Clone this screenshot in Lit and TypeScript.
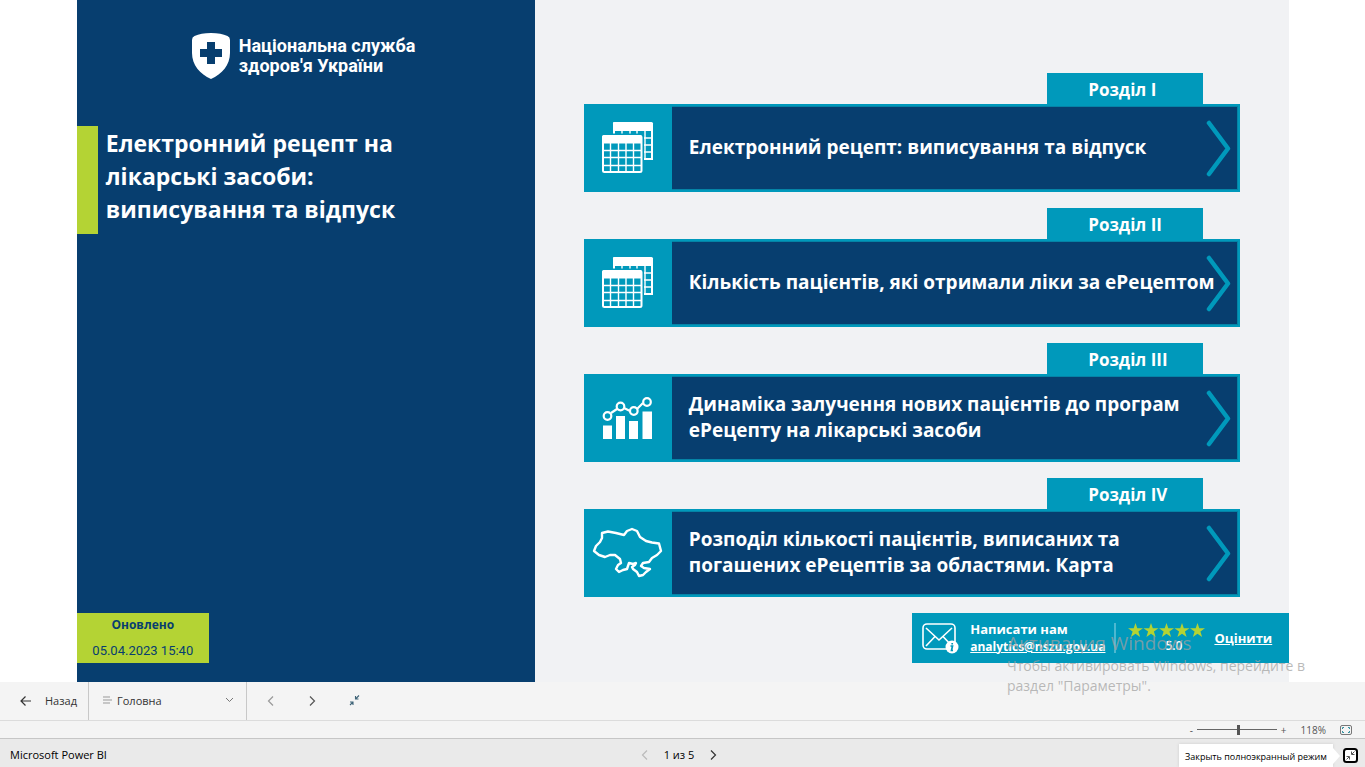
import { LitElement, html, css, svg } from "lit";
import { customElement, property, state } from "lit/decorators.js";

type IconName = "tables" | "chart" | "map";

interface Section {
  tab: string;
  title: string;
  icon: IconName;
}

const SECTIONS: Section[] = [
  { tab: "Розділ I", title: "Електронний рецепт: виписування та відпуск", icon: "tables" },
  { tab: "Розділ II", title: "Кількість пацієнтів, які отримали ліки за еРецептом", icon: "tables" },
  { tab: "Розділ III", title: "Динаміка залучення нових пацієнтів до програм еРецепту на лікарські засоби", icon: "chart" },
  { tab: "Розділ IV", title: "Розподіл кількості пацієнтів, виписаних та погашених еРецептів за областями. Карта", icon: "map" },
];

const ICONS = {
  tables: svg`
    <g fill="none" stroke="#fff" stroke-width="1.4">
      <path d="M30 18V24M38 18V24M46 18V24M53 18V24M61 18V55M38 27V31M46 27V31M53 27V31M60 34H68M60 41H68M60 48H68"/>
      <path stroke-width="2" d="M30 30V20H68V55H60"/>
    </g>
    <path fill="#fff" d="M29 27V19.500q0-1.500 1.500-1.500H67.500q1.500 0 1.500 1.500V27Z"/>
    <path fill="#0099bb" d="M17 31q0-1.500 2-1.500H58q2 0 2 2V70H17Z"/>
    <path fill="#fff" d="M18 39.500V33q0-2 2-2H56q2 0 2 2V39.500Z"/>
    <rect x="19" y="32" width="38.500" height="36" rx="1.500" fill="none" stroke="#fff" stroke-width="2"/>
    <path fill="none" stroke="#fff" stroke-width="1.400" d="M26.500 38V68M34.500 38V68M42 38V68M49.500 38V68M19 46.500H57M19 53.500H57M19 61.500H57"/>`,
  chart: svg`
    <path fill="#fff" d="M19 51.500h9V65h-9ZM32 42h9v23h-9ZM45 47h9v18h-9ZM58.500 37.500h9.500V65h-9.500Z"/>
    <g fill="none" stroke="#fff" stroke-width="2.200">
      <path d="M27 39 33 35M40 34l6 3M53 35l6-6"/>
      <circle cx="23.500" cy="42" r="3.800"/>
      <circle cx="36.500" cy="32.500" r="3.800"/>
      <circle cx="49.800" cy="37" r="3.800"/>
      <circle cx="63" cy="28" r="3.800"/>
    </g>`,
  map: svg`
    <path fill="none" stroke="#fff" stroke-width="2.400" stroke-linejoin="round"
      d="M18 24 24 22.500 32 24 40 26 43 22 48 20 53 22 56 28 59 30 62 32 68 33.500 75 34.500 77 42 73 46 68 49 65 53 59 54 57 57 60 59 66 60 62 63 59 66 55 67 53 63 49 60 48 58 51 56 52 54 49 55 45 54 43 60 39 61 35 63 32 60 34 56 37 54 36 50 31 46 26 46 21 48 15 46 10 42 12 37 16 33 18 29Z"/>`,
};

@customElement("section-card")
class SectionCard extends LitElement {
  @property({ attribute: false }) section!: Section;

  static styles = css`
    :host { display: block; }
    .link {
      display: flex;
      flex-direction: column;
      color: #fff;
      text-decoration: none;
      font-weight: 700;
    }
    .tab {
      align-self: flex-end;
      width: 156px;
      height: 31px;
      margin-right: 37px;
      box-sizing: border-box;
      background: #0099bb;
      font-size: 17px;
      line-height: 34px;
      padding-left: 41px;
    }
    .card {
      display: flex;
      align-items: stretch;
      min-height: 88px;
      box-sizing: border-box;
      background: #073e6f;
      border: 2px solid #0099bb;
      border-left: 0;
      box-shadow: inset 0 0 0 1px #0583a6;
    }
    .icon {
      flex: none;
      width: 88px;
      background: #0099bb;
      margin: -2px 0;
    }
    .icon svg { display: block; width: 88px; height: 88px; }
    .title {
      flex: 1;
      align-self: center;
      padding: 0 0 3px 17px;
      font-size: 19px;
      line-height: 26px;
      min-width: 0;
    }
    .chevron { flex: none; align-self: center; width: 34px; height: 58px; margin-left: -16px; }
  `;

  render() {
    const s = this.section;
    return html`
      <a class="link" href="#">
        <span class="tab">${s.tab}</span>
        <span class="card">
          <span class="icon"><svg viewBox="0 0 88 88" aria-hidden="true">${ICONS[s.icon]}</svg></span>
          <span class="title">${s.title}</span>
          <svg class="chevron" viewBox="0 0 34 58" aria-hidden="true">
            <path d="M5 4 24 29.500 5 55" fill="none" stroke="#0099bb" stroke-width="4.500" stroke-linecap="round" stroke-linejoin="round"/>
          </svg>
        </span>
      </a>`;
  }
}

@customElement("app-root")
class AppRoot extends LitElement {
  @state() private zoom = 118;

  static styles = css`
    :host {
      display: flex;
      flex-direction: column;
      position: relative;
      height: 100vh;
      overflow: hidden;
      background: #fff;
      font-family: "Open Sans", "Noto Sans", sans-serif;
      color: #333;
    }
    button, select {
      font: inherit;
      color: inherit;
      background: none;
      border: 0;
      padding: 0;
      margin: 0;
    }
    svg { display: block; }
    .report {
      flex: 1;
      min-height: 0;
      aspect-ratio: 16 / 9;
      align-self: center;
      margin-left: 1px;
      display: grid;
      grid-template-columns: 458px 1fr;
      background: #f1f2f4;
    }
    .side {
      display: flex;
      flex-direction: column;
      background: #073e6f;
      color: #fff;
    }
    .logo {
      display: flex;
      gap: 9px;
      padding: 33px 0 0 115px;
      font: 700 18px/20px Roboto, sans-serif;
    }
    .logo span { padding-top: 3px; }
    .heading { display: flex; margin-top: 47px; }
    .heading::before { content: ""; width: 21px; background: #b4d334; }
    h1 {
      flex: 1;
      margin: 0;
      padding: 1px 80px 8px 8px;
      font-size: 23px;
      line-height: 33px;
      font-weight: 700;
    }
    .updated {
      width: 132px;
      height: 50px;
      margin: auto 0 19px;
      background: #b4d334;
      color: #073e6f;
      text-align: center;
      font-size: 12px;
    }
    .updated b { display: block; line-height: 24px; }
    .updated time { display: block; font: 13px/28px Roboto, sans-serif; }
    .main { display: flex; flex-direction: column; }
    .sections {
      display: flex;
      flex-direction: column;
      gap: 16px;
      padding: 73px 49px 0;
    }
    .contact {
      display: flex;
      align-items: center;
      height: 50px;
      width: 377px;
      box-sizing: border-box;
      margin: auto 0 19px auto;
      padding: 0 17px 0 9px;
      background: #0099bb;
      color: #fff;
      font-size: 13px;
      font-weight: 700;
      line-height: 18px;
    }
    .contact a { color: #fff; }
    .write { margin-left: 10px; flex: 1; padding-bottom: 1px; }
    .write a { display: block; font-size: 12px; }
    .rating {
      border-left: 2px solid #4db8d0;
      height: 30px;
      padding: 0 9px 0 12px;
      text-align: center;
      font-size: 12px;
      font-weight: 600;
      line-height: 16px;
    }
    .rating span { padding-left: 14px; }
    .toolbar {
      display: flex;
      height: 38px;
      background: #f4f4f4;
      border-bottom: 1px solid #dcdcdc;
      font-size: 11px;
      flex: none;
    }
    .back {
      display: flex;
      align-items: center;
      gap: 13px;
      box-sizing: border-box;
      width: 89px;
      padding: 0 0 1px 20px;
      border-right: 1px solid #c8c8c8;
    }
    .pages {
      display: flex;
      align-items: center;
      width: 158px;
      padding: 0 12px 2px 14px;
      box-sizing: border-box;
      gap: 5px;
      border-right: 1px solid #c8c8c8;
    }
    .pages select { appearance: none; flex: 1; min-width: 0; }
    .steps { display: flex; align-items: center; gap: 29px; padding-left: 18px; }
    .zoombar {
      display: flex;
      align-items: center;
      justify-content: flex-end;
      height: 17px;
      flex: none;
      background: #f4f4f4;
      border-bottom: 1px solid #c6c6c6;
      padding-right: 13px;
      font-size: 10px;
      color: #555;
    }
    .zoombar button, .zoombar output { line-height: 16px; }
    .zoombar output { margin: 0 14px 0 14px; }
    .range {
      appearance: none;
      width: 80px;
      height: 11px;
      margin: 0 4px;
      background: linear-gradient(#666, #666) center / 100% 1px no-repeat;
    }
    .range::-webkit-slider-thumb {
      appearance: none;
      width: 3px;
      height: 10px;
      background: #555;
    }
    .status {
      display: grid;
      grid-template-columns: 1fr auto 1fr;
      align-items: center;
      height: 28px;
      flex: none;
      background: #eaeaea;
      color: #000;
      font-size: 11px;
      padding: 0 7px 0 10px;
    }
    .pager { display: flex; align-items: center; gap: 13px; padding-top: 3px; margin-right: 10px; }
    .brand { padding-top: 3px; }
    .exit { display: flex; justify-content: flex-end; align-items: center; padding-top: 4px; }
    .tip {
      position: absolute;
      right: 32px;
      bottom: 0;
      width: 154px;
      height: 23px;
      background: #fff;
      box-shadow: 0 0 3px #ccc;
      font: 9px/26px "Open Sans", sans-serif;
      color: #000;
      text-align: center;
      white-space: nowrap;
    }
    .tip::after {
      content: "";
      position: absolute;
      left: 100%;
      top: 4px;
      border: 8px solid transparent;
      border-left: 7px solid #fff;
      border-right: 0;
    }
    .watermark {
      position: absolute;
      left: 1007px;
      top: 631px;
      color: #a0a0a0b8;
      font-size: 14px;
      line-height: 20px;
      pointer-events: none;
      white-space: nowrap;
    }
    .watermark p { margin: 0; }
    .watermark .lead { font-size: 19px; line-height: 25px; }
  `;

  private chevron(d: string, color: string) {
    return html`<svg width="12" height="12" viewBox="0 0 12 12" aria-hidden="true">
      <path d=${d} fill="none" stroke=${color} stroke-width="1.200"/></svg>`;
  }

  render() {
    const left = "M8 1.500 3.500 6 8 10.500";
    const right = "M4 1.500 8.500 6 4 10.500";
    return html`
      <div class="report">
        <aside class="side">
          <div class="logo">
            <svg width="38" height="46" viewBox="0 0 38 46" aria-hidden="true">
              <path fill="#fff" d="M19 0C26 0 31 1 35.500 3Q38 4 38 7V20C38 32 30 41 19 46 8 41 0 32 0 20V7Q0 4 2.500 3C7 1 12 0 19 0Z"/>
              <path fill="#073e6f" d="M15 9h8v7h7v8h-7v7h-8v-7H8v-8h7Z"/>
            </svg>
            <span>Національна служба<br />здоров'я України</span>
          </div>
          <div class="heading"><h1>Електронний рецепт на<br />лікарські засоби:<br />виписування та відпуск</h1></div>
          <div class="updated"><b>Оновлено</b><time>05.04.2023 15:40</time></div>
        </aside>
        <main class="main">
          <div class="sections">
            ${SECTIONS.map((s) => html`<section-card .section=${s}></section-card>`)}
          </div>
          <div class="contact">
            <svg width="39" height="34" viewBox="0 0 39 34" aria-hidden="true">
              <g fill="none" stroke="#fff" stroke-width="1.600">
                <rect x="2" y="3" width="32" height="25" rx="4"/>
                <path d="M5 7 18 19 31 7M5 25 14 15.500M31 25 22 15.500"/>
              </g>
              <circle cx="31" cy="26" r="6.500" fill="#fff"/>
              <path d="M29.500 25h2l-1 4.500h1.500M31.200 22v1.500" fill="none" stroke="#0099bb" stroke-width="1.700"/>
            </svg>
            <div class="write">Написати нам<a href="mailto:analytics@nszu.gov.ua">analytics@nszu.gov.ua</a></div>
            <div class="rating">
              <svg width="77" height="15" viewBox="0 0 77 15" aria-hidden="true">
                ${[0, 1, 2, 3, 4].map((i) => svg`<path transform="translate(${i * 15.5} 0)" fill="#b4d334" d="M7.500 0 9.300 5.300H15L10.400 8.600 12.100 14 7.500 10.700 2.900 14 4.600 8.600 0 5.300H5.700Z"/>`)}
              </svg>
              <span>5.0</span>
            </div>
            <a href="#">Оцінити</a>
          </div>
        </main>
      </div>

      <nav class="toolbar">
        <button class="back">
          <svg width="12" height="12" viewBox="0 0 12 12" aria-hidden="true"><path d="M11 6H1.500M5.500 1.500 1 6l4.500 4.500" fill="none" stroke="#333" stroke-width="1.200"/></svg>
          Назад
        </button>
        <div class="pages">
          <svg width="9" height="8" viewBox="0 0 9 8" aria-hidden="true"><path d="M0 1H7M0 4H9M0 7H7" stroke="#999"/></svg>
          <select aria-label="Сторінка"><option>Головна</option></select>
          <svg width="9" height="6" viewBox="0 0 9 6" aria-hidden="true"><path d="M1 1 4.500 4.500 8 1" fill="none" stroke="#777"/></svg>
        </div>
        <div class="steps">
          <button aria-label="Попередня">${this.chevron(left, "#999")}</button>
          <button aria-label="Наступна">${this.chevron(right, "#555")}</button>
          <button aria-label="Згорнути">
            <svg width="14" height="14" viewBox="0 0 14 14" aria-hidden="true"><path d="M12 1.500 8.500 5M8.500 2V5H11.500M3 11 6 8M3 8H6V11" fill="none" stroke="#3f6478" stroke-width="1.100"/></svg>
          </button>
        </div>
      </nav>

      <div class="zoombar">
        <button aria-label="Зменшити">-</button>
        <input class="range" type="range" aria-label="Масштаб" min="10" max="216" .value=${String(this.zoom)}
          @input=${(e: Event) => (this.zoom = Number((e.target as HTMLInputElement).value))} />
        <button aria-label="Збільшити">+</button>
        <output>${this.zoom}%</output>
        <button aria-label="За розміром сторінки">
          <svg width="12" height="10" viewBox="0 0 12 10" aria-hidden="true">
            <rect x=".5" y=".5" width="11" height="9" rx="1.500" fill="none" stroke="#777"/>
            <path d="M2.500 4V2.500H4M8 2.500H9.500V4M9.500 6V7.500H8M4 7.500H2.500V6" fill="none" stroke="#2f8f9f"/>
          </svg>
        </button>
      </div>

      <footer class="status">
        <span class="brand">Microsoft Power BI</span>
        <span class="pager">
          <button aria-label="Назад">${this.chevron(left, "#bbb")}</button>
          1 из 5
          <button aria-label="Вперед">${this.chevron(right, "#333")}</button>
        </span>
        <span class="exit">
          <button aria-label="Закрыть полноэкранный режим">
            <svg width="15" height="15" viewBox="0 0 15 15" aria-hidden="true">
              <rect x="1" y="1" width="13" height="13" rx="2.500" fill="#fff" stroke="#000" stroke-width="2"/>
              <path d="M11.500 3.500 9 6M8.500 3.500V6.500H11.500M3.500 11.500 6 9M3.500 8.500H6.500V11.500" fill="none" stroke="#555"/>
            </svg>
          </button>
        </span>
      </footer>
      <div class="tip" role="tooltip">Закрыть полноэкранный режим</div>
      <div class="watermark">
        <p class="lead">Активация Windows</p>
        <p>Чтобы активировать Windows, перейдите в<br />раздел "Параметры".</p>
      </div>
    `;
  }
}
